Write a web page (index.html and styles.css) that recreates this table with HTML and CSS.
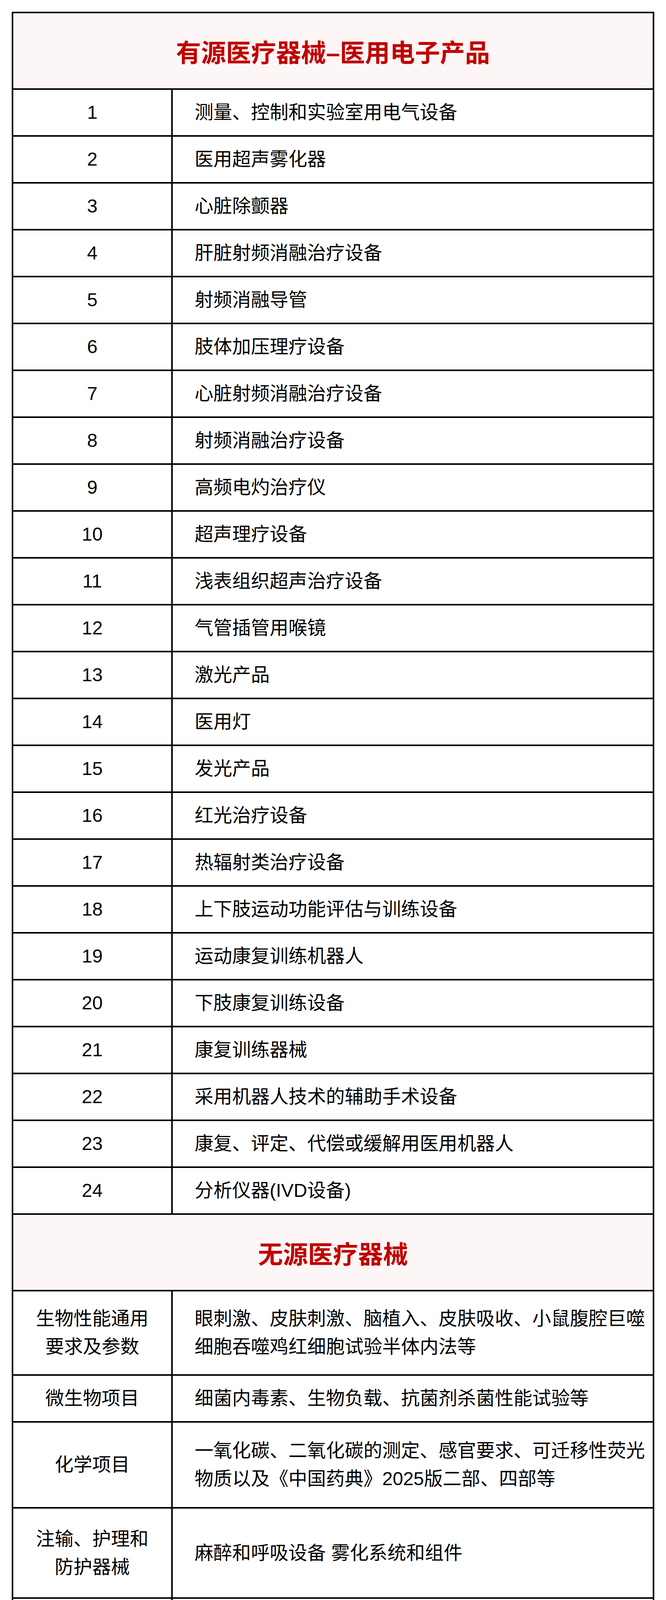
FILE: index.html
```html
<!DOCTYPE html>
<html lang="zh-CN">
<head>
<meta charset="utf-8">
<title>医疗器械检测项目</title>
<link rel="stylesheet" href="styles.css">
</head>
<body>
<div class="sheet">
  <div class="title">有源医疗器械–医用电子产品</div>
  <div class="row"><div class="c1">1</div><div class="c2">测量、控制和实验室用电气设备</div></div>
  <div class="row"><div class="c1">2</div><div class="c2">医用超声雾化器</div></div>
  <div class="row"><div class="c1">3</div><div class="c2">心脏除颤器</div></div>
  <div class="row"><div class="c1">4</div><div class="c2">肝脏射频消融治疗设备</div></div>
  <div class="row"><div class="c1">5</div><div class="c2">射频消融导管</div></div>
  <div class="row"><div class="c1">6</div><div class="c2">肢体加压理疗设备</div></div>
  <div class="row"><div class="c1">7</div><div class="c2">心脏射频消融治疗设备</div></div>
  <div class="row"><div class="c1">8</div><div class="c2">射频消融治疗设备</div></div>
  <div class="row"><div class="c1">9</div><div class="c2">高频电灼治疗仪</div></div>
  <div class="row"><div class="c1">10</div><div class="c2">超声理疗设备</div></div>
  <div class="row"><div class="c1">11</div><div class="c2">浅表组织超声治疗设备</div></div>
  <div class="row"><div class="c1">12</div><div class="c2">气管插管用喉镜</div></div>
  <div class="row"><div class="c1">13</div><div class="c2">激光产品</div></div>
  <div class="row"><div class="c1">14</div><div class="c2">医用灯</div></div>
  <div class="row"><div class="c1">15</div><div class="c2">发光产品</div></div>
  <div class="row"><div class="c1">16</div><div class="c2">红光治疗设备</div></div>
  <div class="row"><div class="c1">17</div><div class="c2">热辐射类治疗设备</div></div>
  <div class="row"><div class="c1">18</div><div class="c2">上下肢运动功能评估与训练设备</div></div>
  <div class="row"><div class="c1">19</div><div class="c2">运动康复训练机器人</div></div>
  <div class="row"><div class="c1">20</div><div class="c2">下肢康复训练设备</div></div>
  <div class="row"><div class="c1">21</div><div class="c2">康复训练器械</div></div>
  <div class="row"><div class="c1">22</div><div class="c2">采用机器人技术的辅助手术设备</div></div>
  <div class="row"><div class="c1">23</div><div class="c2">康复、评定、代偿或缓解用医用机器人</div></div>
  <div class="row"><div class="c1">24</div><div class="c2">分析仪器(IVD设备)</div></div>
  <div class="title">无源医疗器械</div>
  <div class="row bio"><div class="c1">生物性能通用<br>要求及参数</div><div class="c2">眼刺激、皮肤刺激、脑植入、皮肤吸收、小鼠腹腔巨噬<br>细胞吞噬鸡红细胞试验半体内法等</div></div>
  <div class="row"><div class="c1">微生物项目</div><div class="c2">细菌内毒素、生物负载、抗菌剂杀菌性能试验等</div></div>
  <div class="row chem"><div class="c1">化学项目</div><div class="c2">一氧化碳、二氧化碳的测定、感官要求、可迁移性荧光<br>物质以及《中国药典》2025版二部、四部等</div></div>
  <div class="row infuse"><div class="c1">注输、护理和<br>防护器械</div><div class="c2">麻醉和呼吸设备 雾化系统和组件</div></div>
  <div class="group">
    <div class="c1">无源手术器械</div>
    <div class="subs">
      <div class="sub">一次性使用无菌肛肠套扎器 胶圈或弹力线式</div>
      <div class="sub">人类体外辅助生殖技术用医疗器械 胚胎移植导管</div>
      <div class="sub">乳房活检与旋切设备</div>
      <div class="sub">非吸收性外科缝线</div>
      <div class="sub">医用缝合针</div>
    </div>
  </div>
</div>
</body>
</html>
```

FILE: styles.css
```css
html, body {
  margin: 0;
  padding: 0;
  background: #ffffff;
}

body {
  font-family: "Liberation Sans", "Noto Sans CJK SC", sans-serif;
  color: #000000;
}

.sheet {
  width: 1644px;
  box-sizing: border-box;
  margin: 30px 0 0 30px;
  border: 4px solid #000000;
}

.sheet > * + * {
  border-top: 4px solid #000000;
}

.title {
  height: 192px;
  background: #fdf6f6;
  color: #c00000;
  font-size: 64px;
  font-weight: 700;
  display: flex;
  align-items: center;
  justify-content: center;
}

.row {
  display: grid;
  grid-template-columns: 404px 1fr;
  height: 116px;
}

.row.bio {
  height: 212px;
}

.row.chem {
  height: 216px;
}

.row.infuse {
  height: 227px;
}

.c1 {
  display: flex;
  align-items: center;
  justify-content: center;
  text-align: center;
  font-size: 48px;
  line-height: 72px;
}

.c2 {
  border-left: 4px solid #000000;
  display: flex;
  align-items: center;
  padding-left: 56px;
  font-size: 48px;
  line-height: 72px;
  white-space: nowrap;
}

.group {
  display: grid;
  grid-template-columns: 404px 1fr;
}

.subs {
  border-left: 4px solid #000000;
}

.sub {
  height: 116px;
  display: flex;
  align-items: center;
  padding-left: 56px;
  font-size: 48px;
  line-height: 72px;
  white-space: nowrap;
}

.sub + .sub {
  border-top: 4px solid #000000;
}
```
